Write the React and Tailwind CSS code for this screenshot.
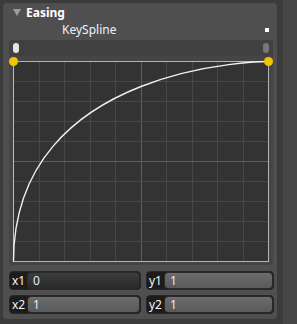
import React from 'react'

const FONT = "font-['Segoe_UI','Noto_Sans','Open_Sans',sans-serif]"

function Graph() {
  const vs = [1, 2, 3, 4, 5, 6, 7, 8, 9]
  return (
    <svg width="256" height="201" className="block overflow-visible">
      <rect x="0" y="0" width="256" height="201" fill="#333333" />
      {vs.map(i => (
        <line key={'v' + i} x1={Math.round(i * 25.5) + 0.5} y1="0" x2={Math.round(i * 25.5) + 0.5} y2="201"
          stroke={i === 5 ? '#5e5e5e' : '#474747'} strokeWidth="1" />
      ))}
      {vs.map(i => (
        <line key={'h' + i} x1="0" y1={i * 20 + 0.5} x2="256" y2={i * 20 + 0.5}
          stroke={i === 5 ? '#5e5e5e' : '#474747'} strokeWidth="1" />
      ))}
      {/* frame */}
      <line x1="0" y1="0.5" x2="256" y2="0.5" stroke="#b4b4b4" strokeWidth="1" />
      <line x1="255.5" y1="0" x2="255.5" y2="201" stroke="#b4b4b4" strokeWidth="1" />
      <line x1="0" y1="200.5" x2="256" y2="200.5" stroke="#b4b4b4" strokeWidth="1" />
      {/* handle */}
      <line x1="0.5" y1="0.5" x2="0.5" y2="201" stroke="#f2c200" strokeWidth="1" />
      {/* curve */}
      <path d="M0.5 200.5 C0.5 0.5 255.5 0.5 255.5 0.5" fill="none" stroke="#f2f2f2" strokeWidth="1.4" />
      <circle cx="0.5" cy="0.5" r="4.5" fill="#f5c400" />
      <circle cx="255.5" cy="0.5" r="4.5" fill="#f5c400" />
    </svg>
  )
}

function Field({ label, value, width, labelW, active }) {
  return (
    <div className={`flex h-[19px] rounded-[4px] bg-[#1c1c1c] border border-[#262626] ${width}`}>
      <div className={`${labelW} flex items-center pl-[2px] text-[12px] text-[#f4f4f4] leading-none`}>{label}</div>
      <div className={`flex-1 flex items-center pl-[5px] rounded-[4px] border border-[#2a2a2a] text-[12px] leading-none text-[#e2eefb] ${
        active ? 'bg-gradient-to-b from-[#3c3c3c] to-[#2b2b2b]' : 'bg-gradient-to-b from-[#6c6c6c] to-[#5a5a5a]'
      }`}>
        {value}
      </div>
    </div>
  )
}

export default function App() {
  return (
    <div className={`w-[297px] h-[324px] bg-[#3b3b3b] flex overflow-hidden ${FONT}`}>
      <div className="ml-[3px] mt-[3px] w-[274px] h-[316px] bg-[#4f4f4f] rounded-[4px] flex flex-col">
        {/* Header */}
        <div className="h-[19px] flex items-center pl-[10px]">
          <svg width="8" height="7" viewBox="0 0 8 7" className="mr-[5px]">
            <path d="M0 0 H8 L4 7 Z" fill="#9c9c9c" />
          </svg>
          <span className="text-[12px] font-bold text-white leading-none">Easing</span>
        </div>
        <div className="h-[15px] flex items-center pl-[59px] pr-[8px]">
          <span className="text-[12px] text-[#eef3fa] leading-none">KeySpline</span>
          <div className="ml-auto w-[4px] h-[4px] bg-white" />
        </div>

        {/* Spline editor */}
        <div className="mt-[3px] ml-[6px] w-[264px] bg-[#454545] rounded-[4px] flex flex-col">
          <div className="h-[16px] bg-[#404040] rounded-[3px] flex items-center justify-between px-[4px]">
            <div className="w-[6px] h-[10px] rounded-full bg-[#e4e4e4]" />
            <div className="w-[6px] h-[10px] rounded-full bg-[#777777]" />
          </div>
          <div className="pt-[5px] pl-[4px] pb-[3px]">
            <Graph />
          </div>
        </div>

        {/* Inputs */}
        <div className="mt-[6px] ml-[6px] flex flex-col gap-[5px]">
          <div className="flex gap-[5px]">
            <Field label="x1" value="0" width="w-[132px]" labelW="w-[17px]" active />
            <Field label="y1" value="1" width="w-[128px]" labelW="w-[17px]" />
          </div>
          <div className="flex gap-[5px]">
            <Field label="x2" value="1" width="w-[132px]" labelW="w-[17px]" />
            <Field label="y2" value="1" width="w-[128px]" labelW="w-[17px]" />
          </div>
        </div>
      </div>
      <div className="ml-[6px] w-[14px] bg-[#464646]" />
    </div>
  )
}
